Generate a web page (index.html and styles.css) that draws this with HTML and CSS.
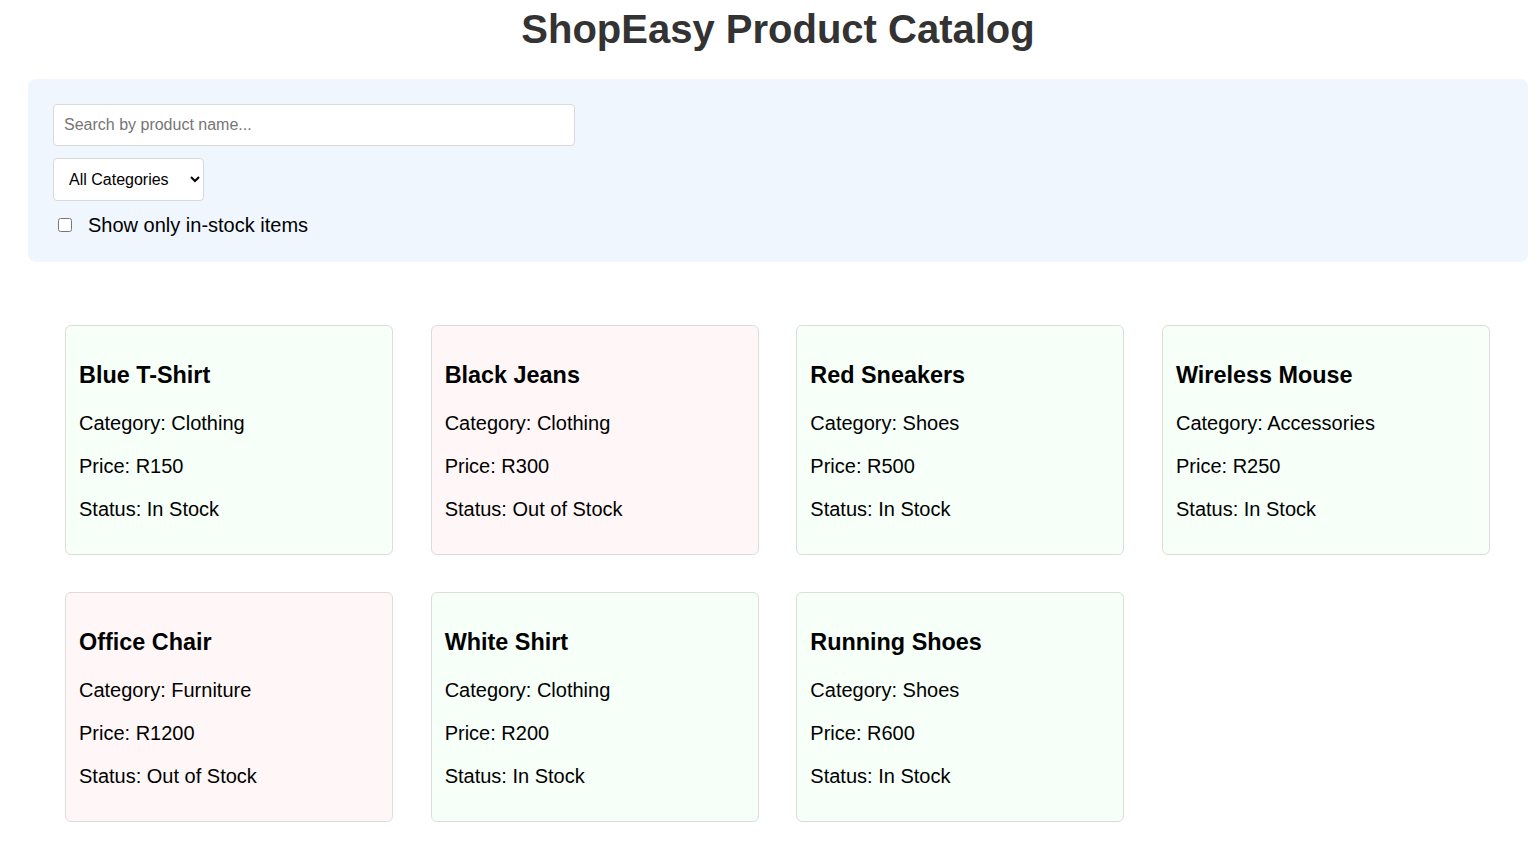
FILE: index.html
```html
<!DOCTYPE html>
<html lang="en">
<head>
<meta charset="utf-8">
<title>ShopEasy Product Catalog</title>
<link rel="stylesheet" href="styles.css">
</head>
<body>
<div class="app">
  <h1 class="title">ShopEasy Product Catalog</h1>
  <section class="filters">
    <input class="search" type="text" placeholder="Search by product name...">
    <select class="category">
      <option>All Categories</option>
      <option>Clothing</option>
      <option>Shoes</option>
      <option>Accessories</option>
      <option>Furniture</option>
    </select>
    <label class="stock-toggle">
      <input class="stock-check" type="checkbox">
      <span>Show only in-stock items</span>
    </label>
  </section>
  <section class="grid">
    <div class="card in">
      <h3>Blue T-Shirt</h3>
      <p>Category: Clothing</p>
      <p>Price: R150</p>
      <p>Status: In Stock</p>
    </div>
    <div class="card out">
      <h3>Black Jeans</h3>
      <p>Category: Clothing</p>
      <p>Price: R300</p>
      <p>Status: Out of Stock</p>
    </div>
    <div class="card in">
      <h3>Red Sneakers</h3>
      <p>Category: Shoes</p>
      <p>Price: R500</p>
      <p>Status: In Stock</p>
    </div>
    <div class="card in">
      <h3>Wireless Mouse</h3>
      <p>Category: Accessories</p>
      <p>Price: R250</p>
      <p>Status: In Stock</p>
    </div>
    <div class="card out">
      <h3>Office Chair</h3>
      <p>Category: Furniture</p>
      <p>Price: R1200</p>
      <p>Status: Out of Stock</p>
    </div>
    <div class="card in">
      <h3>White Shirt</h3>
      <p>Category: Clothing</p>
      <p>Price: R200</p>
      <p>Status: In Stock</p>
    </div>
    <div class="card in">
      <h3>Running Shoes</h3>
      <p>Category: Shoes</p>
      <p>Price: R600</p>
      <p>Status: In Stock</p>
    </div>
  </section>
</div>
</body>
</html>
```

FILE: styles.css
```css
* { box-sizing: border-box; }

html, body {
  margin: 0;
  padding: 0;
  background: #ffffff;
}

body {
  font-family: "Liberation Sans", Arial, sans-serif;
  color: #000;
}

.app {
  width: 1500px;
  margin-left: 28px;
  padding-top: 6px;
}

.title {
  margin: 0 0 27px;
  text-align: center;
  font-size: 40px;
  font-weight: bold;
  color: #333333;
  line-height: 46px;
}

.filters {
  background: #eff6fe;
  border-radius: 8px;
  padding: 25px;
  display: flex;
  flex-direction: column;
  align-items: flex-start;
  gap: 12px;
}

.search {
  width: 522px;
  height: 42px;
  padding: 0 10px;
  border: 1px solid #d9d9d9;
  border-radius: 4px;
  font-family: "Liberation Sans", Arial, sans-serif;
  font-size: 16px;
  color: #000;
  background: #fff;
}

.search::placeholder {
  color: #757575;
}

.category {
  width: 151px;
  height: 43px;
  padding: 0 8px 0 11px;
  border: 1px solid #d9d9d9;
  border-radius: 4px;
  font-family: "Liberation Sans", Arial, sans-serif;
  font-size: 16px;
  color: #000;
  background: #fff;
}

.stock-toggle {
  display: flex;
  align-items: center;
  font-size: 20px;
  line-height: 24px;
  margin-left: 5px;
}

.stock-check {
  width: 14px;
  height: 14px;
  margin: 0 16px 0 0;
}

.grid {
  margin: 63px 38px 0 37px;
  display: grid;
  grid-template-columns: repeat(4, 1fr);
  column-gap: 37.67px;
  row-gap: 37px;
}

.card {
  border: 1px solid #dcdcdc;
  border-radius: 6px;
  padding: 13px;
  font-size: 20px;
  line-height: 23px;
}

.card.in { background: #f6fff8; }
.card.out { background: #fff7f7; }

.card h3 {
  font-size: 1.17em;
  line-height: 27px;
  margin: 23px 0;
  font-weight: bold;
}

.card p {
  margin: 20px 0;
}
```
